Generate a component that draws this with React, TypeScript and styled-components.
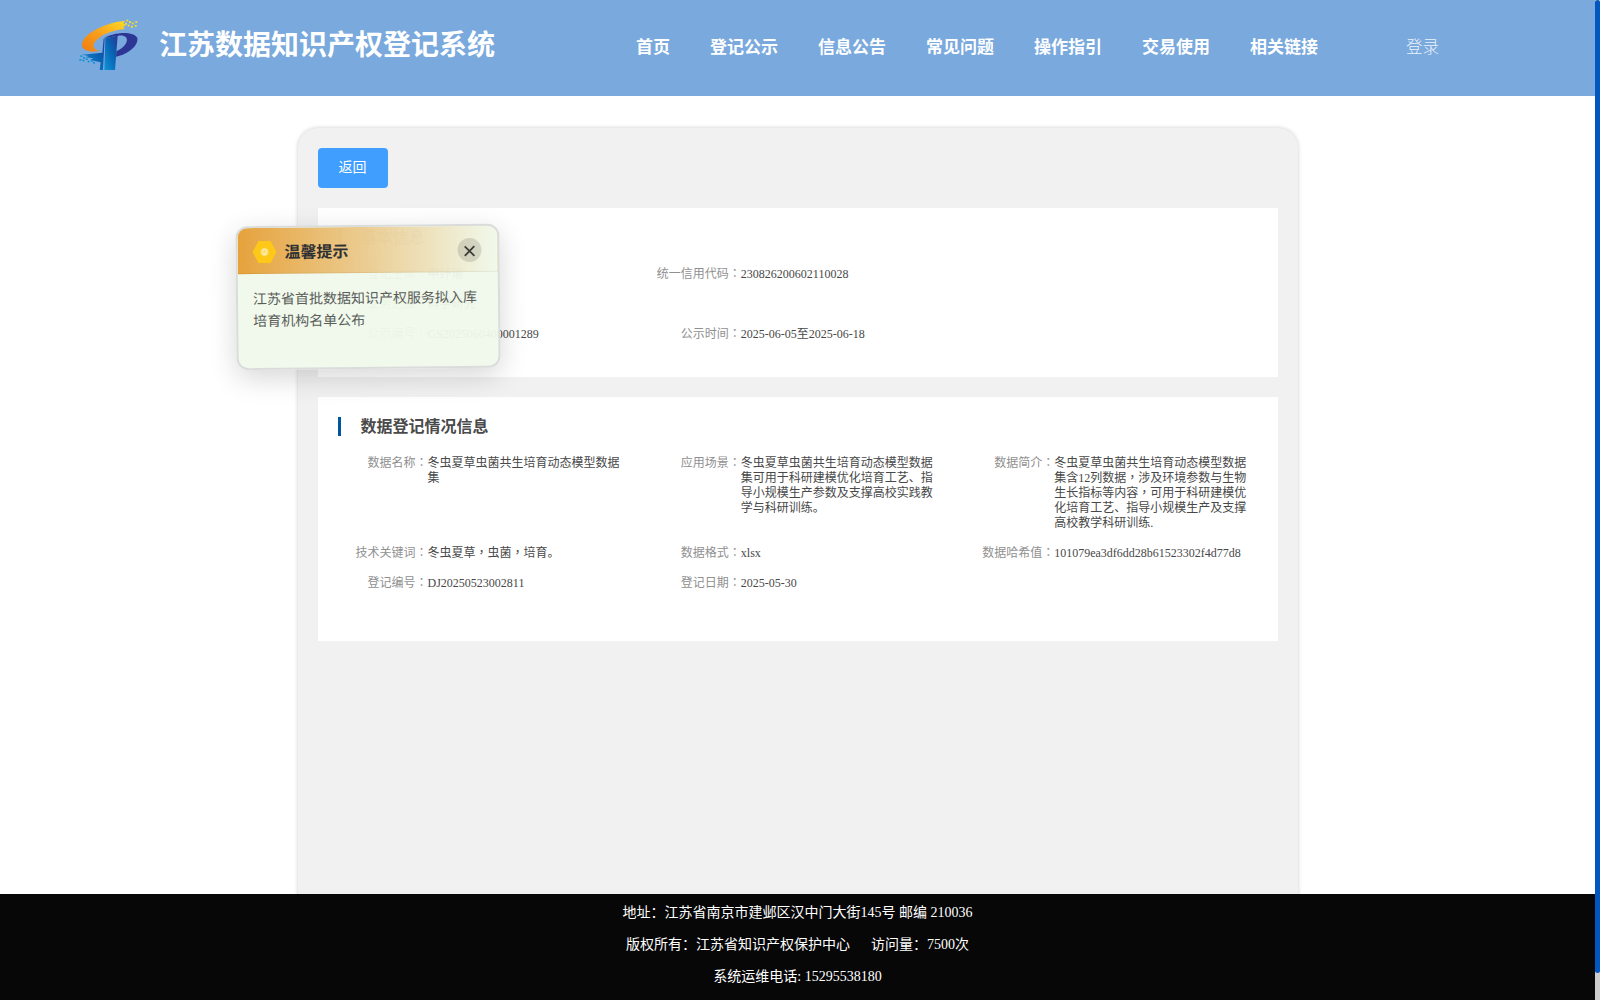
import React from 'react';
import styled, { createGlobalStyle } from 'styled-components';

const Global = createGlobalStyle`
  * { box-sizing: border-box; }
  html, body { margin: 0; padding: 0; overflow: hidden; background: #fff; }
  body { font-family: "Liberation Serif", "Noto Sans CJK SC", serif; }
`;

const Page = styled.div`
  display: grid;
  grid-template-columns: 1595px 5px;
  width: 1600px;
  height: 1000px;
  overflow: hidden;
`;

const Main = styled.div`
  display: flex;
  flex-direction: column;
  height: 1000px;
  overflow: hidden;
`;

const ScrollTrack = styled.div`
  height: 1000px;
  background: #cdcdcd;
`;

const ScrollThumb = styled.div`
  height: 973px;
  border-radius: 3px;
  background: #0257bf;
`;

const Header = styled.header`
  flex: none;
  display: flex;
  align-items: center;
  height: 96px;
  padding-left: 78px;
  background: #79a9dd;
  color: #fff;
`;

const LogoSvg = styled.svg`
  flex: none;
  width: 62px;
  height: 54px;
  margin-top: -6px;
`;

const SiteName = styled.h1`
  flex: none;
  width: 477px;
  margin: -4px 0 0 19px;
  font-size: 28px;
  line-height: 40px;
  font-weight: 600;
  white-space: nowrap;
`;

const Nav = styled.nav`
  display: flex;
  gap: 40px;
  font-size: 17px;
  line-height: 24px;
  font-weight: 600;
  margin-top: -1px;
`;

const NavItem = styled.a`
  white-space: nowrap;
`;

const Login = styled.a`
  margin: 0 0 0 88px;
  font-size: 16.5px;
  font-weight: 300;
  line-height: 24px;
  opacity: 0.85;
`;

const Content = styled.main`
  flex: 1;
  min-height: 0;
  display: flex;
  justify-content: center;
  padding-top: 32px;
  overflow: hidden;
`;

const Panel = styled.section`
  width: 1000px;
  height: 900px;
  padding: 20px;
  border-radius: 20px;
  background: #f1f1f1;
  box-shadow: 0 0 4px rgba(0, 0, 0, 0.2);
`;

const BackButton = styled.button`
  display: block;
  width: 70px;
  height: 40px;
  padding: 0;
  border: 0;
  border-radius: 4px;
  background: #409eff;
  color: #fff;
  font-family: inherit;
  font-size: 14px;
  line-height: 40px;
`;

const Card = styled.div<{ $height: number }>`
  height: ${(p) => p.$height}px;
  margin-top: 20px;
  padding: 20px 0 0 20px;
  background: #fff;
`;

const CardTitle = styled.h2`
  height: 19px;
  margin: 0 0 20px;
  padding-left: 20px;
  border-left: 3px solid #00559d;
  color: #4a4a4a;
  font-size: 16px;
  line-height: 20px;
  font-weight: 700;
`;

const Fields = styled.div`
  display: grid;
  grid-template-columns: repeat(3, 1fr);
  row-gap: 15px;
`;

const Field = styled.div<{ $wide?: boolean }>`
  display: flex;
  grid-column: ${(p) => (p.$wide ? '1 / -1' : 'auto')};
  font-size: 12px;
  line-height: 15px;
`;

const Label = styled.span`
  flex: none;
  width: 90px;
  text-align: right;
  color: #909090;
  white-space: nowrap;
`;

const Value = styled.span`
  width: 196px;
  color: #484848;
`;

const Centered = styled.span`
  font-family: "Noto Sans CJK TC", sans-serif;
  line-height: 0;
`;

const Footer = styled.footer`
  flex: none;
  height: 106px;
  padding-top: 3px;
  background: #070707;
  color: #fff;
  text-align: center;
`;

const FooterLine = styled.p`
  margin: 0;
  font-size: 14px;
  line-height: 32px;
  white-space: pre;
`;

const Notice = styled.aside`
  position: absolute;
  left: 236px;
  top: 225px;
  width: 264px;
  height: 144px;
  transform: rotate(-0.55deg);
  border: 2px solid #dadcdb;
  border-radius: 12px;
  overflow: hidden;
  background: rgba(240, 249, 235, 0.95);
  box-shadow: 0 8px 28px rgba(0, 0, 0, 0.16);
`;

const NoticeHead = styled.div`
  display: flex;
  align-items: center;
  height: 46px;
  padding: 2px 16px 0 15px;
  border-bottom: 1px solid rgba(0, 0, 0, 0.06);
  background: linear-gradient(90deg, #e6a23c, rgba(240, 249, 235, 0.4));
`;

const NoticeIcon = styled.svg`
  width: 24px;
  height: 22px;
`;

const NoticeTitle = styled.strong`
  flex: 1;
  margin: 3px 0 0 8px;
  font-size: 16px;
  line-height: 24px;
  color: #303133;
`;

const Close = styled.button`
  display: grid;
  place-items: center;
  width: 24px;
  height: 24px;
  padding: 2px 0 0;
  border: 0;
  border-radius: 50%;
  background: rgba(0, 0, 0, 0.12);
`;

const NoticeBody = styled.p`
  margin: 0;
  padding: 15px 15px 0;
  color: #5a5d5a;
  font-size: 14px;
  line-height: 22.4px;
`;

type Item = { label: string; value: string; wide?: boolean };

const basic: Item[] = [
  { label: '登记主体', value: '申纾瑜' },
  { label: '统一信用代码', value: '230826200602110028' },
  { label: '业务范围', value: '科学研究', wide: true },
  { label: '公示编号', value: 'GS2025060400001289' },
  { label: '公示时间', value: '2025-06-05至2025-06-18' },
];

const registration: Item[] = [
  { label: '数据名称', value: '冬虫夏草虫菌共生培育动态模型数据集' },
  {
    label: '应用场景',
    value: '冬虫夏草虫菌共生培育动态模型数据集可用于科研建模优化培育工艺、指导小规模生产参数及支撑高校实践教学与科研训练。',
  },
  {
    label: '数据简介',
    value:
      '冬虫夏草虫菌共生培育动态模型数据集含12列数据，涉及环境参数与生物生长指标等内容，可用于科研建模优化培育工艺、指导小规模生产及支撑高校教学科研训练.',
  },
  { label: '技术关键词', value: '冬虫夏草，虫菌，培育。' },
  { label: '数据格式', value: 'xlsx' },
  { label: '数据哈希值', value: '101079ea3df6dd28b61523302f4d77d8' },
  { label: '登记编号', value: 'DJ20250523002811' },
  { label: '登记日期', value: '2025-05-30' },
];

const nav = ['首页', '登记公示', '信息公告', '常见问题', '操作指引', '交易使用', '相关链接'];

function FieldList({ items }: { items: Item[] }) {
  return (
    <Fields>
      {items.map((item) => (
        <Field key={item.label} $wide={item.wide}>
          <Label>
            {item.label}
            <Centered lang="zh-TW">：</Centered>
          </Label>
          <Value>
            {item.value.split('，').map((part, i) => (
              <React.Fragment key={i}>
                {i > 0 && <Centered lang="zh-TW">，</Centered>}
                {part}
              </React.Fragment>
            ))}
          </Value>
        </Field>
      ))}
    </Fields>
  );
}

const yellowPixels = [
  [172, 31], [180, 36], [188, 40], [199, 36], [168, 41], [176, 46], [186, 50], [197, 47],
];
const bluePixels = [
  [34, 138], [42, 143], [31, 149], [40, 151], [50, 147], [56, 154], [66, 152], [72, 158],
];

function Logo() {
  return (
    <LogoSvg viewBox="24 24 186 162">
      <defs>
        <linearGradient id="swoosh" x1="0" y1="1" x2="1" y2="0">
          <stop offset="0" stopColor="#f07c0c" />
          <stop offset="0.5" stopColor="#f9a01e" />
          <stop offset="1" stopColor="#ffdc24" />
        </linearGradient>
        <linearGradient id="stem" x1="0" y1="1" x2="1" y2="0">
          <stop offset="0" stopColor="#0f93d8" />
          <stop offset="0.6" stopColor="#0a5fb0" />
          <stop offset="1" stopColor="#2d3695" />
        </linearGradient>
      </defs>
      <path
        d="M166 33 C110 36 38 70 36 104 C36 120 58 128 90 123 C66 118 64 102 84 86 C106 68 136 60 164 57 L160 50 L168 46 L160 40 Z"
        fill="url(#swoosh)"
      />
      <path
        d="M103 84 C126 68 190 60 202 84 C206 108 172 134 138 140 L139 124 C160 116 178 94 168 82 C162 76 152 76 143 78 Z"
        fill="#2d3695"
      />
      <path d="M106 84 L143 77 L135 180 L103 180 Z" fill="url(#stem)" />
      <path d="M101 86 L104 85 L99 180 L89 180 L92 157 L60 150 L70 145 L46 142 L56 138 L36 134 L97 128 Z" fill="url(#stem)" />
      {yellowPixels.map(([x, y]) => (
        <rect key={`${x}-${y}`} x={x - 3} y={y - 2} width="6" height="5" fill="#ffdc24" />
      ))}
      {bluePixels.map(([x, y]) => (
        <rect key={`${x}-${y}`} x={x - 3} y={y - 2} width="6" height="5" fill="#1492d6" />
      ))}
    </LogoSvg>
  );
}

export default function App() {
  return (
    <Page>
      <Global />
      <Main>
        <Header>
          <Logo />
          <SiteName>江苏数据知识产权登记系统</SiteName>
          <Nav>
            {nav.map((n) => (
              <NavItem key={n}>{n}</NavItem>
            ))}
          </Nav>
          <Login>登录</Login>
        </Header>
        <Content>
          <Panel>
            <BackButton>返回</BackButton>
            <Card $height={169}>
              <CardTitle>基本信息</CardTitle>
              <FieldList items={basic} />
            </Card>
            <Card $height={244}>
              <CardTitle>数据登记情况信息</CardTitle>
              <FieldList items={registration} />
            </Card>
          </Panel>
        </Content>
        <Footer>
          <FooterLine>地址：江苏省南京市建邺区汉中门大街145号 邮编 210036</FooterLine>
          <FooterLine>{'版权所有：江苏省知识产权保护中心\u00a0\u00a0\u00a0\u00a0\u00a0\u00a0访问量：7500次'}</FooterLine>
          <FooterLine>系统运维电话: 15295538180</FooterLine>
        </Footer>
      </Main>
      <ScrollTrack>
        <ScrollThumb />
      </ScrollTrack>
      <Notice>
        <NoticeHead>
          <NoticeIcon viewBox="0 0 24 22">
            <path d="M6 0H18L24 11L18 22H6L0 11Z" fill="#fdc817" />
            <circle cx="12" cy="11" r="4" fill="#fddf74" />
            <circle cx="12" cy="10.500" r="2.200" fill="none" stroke="#fff0b8" strokeWidth="0.900" />
            <path d="M10.500 13.500h3" stroke="#fff4c8" strokeWidth="0.900" />
          </NoticeIcon>
          <NoticeTitle>温馨提示</NoticeTitle>
          <Close aria-label="关闭">
            <svg width="12" height="12" viewBox="0 0 12 12">
              <path d="M1.200 1.200L10.800 10.800M10.800 1.200L1.200 10.800" stroke="#3c3c38" strokeWidth="1.800" />
            </svg>
          </Close>
        </NoticeHead>
        <NoticeBody>江苏省首批数据知识产权服务拟入库培育机构名单公布</NoticeBody>
      </Notice>
    </Page>
  );
}
